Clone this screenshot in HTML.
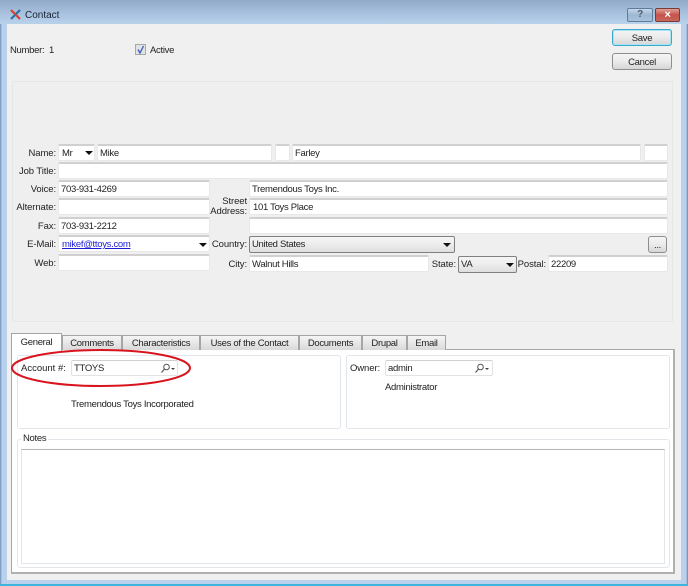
<!DOCTYPE html>
<html><head><meta charset="utf-8"><style>
html,body{margin:0;padding:0;width:688px;height:586px;overflow:hidden;background:#fff}
*{box-sizing:border-box}
#w{position:absolute;left:0;top:0;width:688px;height:586px;overflow:hidden;font:9.5px/14px "Liberation Sans",sans-serif;letter-spacing:-.3px;color:#222;filter:blur(.3px);
background:linear-gradient(90deg,#6d8fb8 0,#b9d1ec 2px,#b9d1ec 686px,#5f86b0 688px)}
#tb{position:absolute;left:0;top:0;width:688px;height:24px;background:linear-gradient(180deg,#90a9c8,#a9c3e0 60%,#b9d2ec)}
#c{position:absolute;left:7px;top:24px;width:674px;height:556px;background:#f0f0f0}
#bot{position:absolute;left:0;top:584px;width:688px;height:2px;background:#3cb4dc}
.a{position:absolute}
.t{position:absolute;white-space:nowrap;line-height:14px}
.r{text-align:right;letter-spacing:-.1px}
.i{position:absolute;background:#fff;border:1px solid #e8e8e8;border-top:2px solid #d0d0d0;border-radius:2px;padding-left:2px;white-space:nowrap;line-height:16px}
.cb{position:absolute;background:linear-gradient(180deg,#f4f4f4,#eeeeee 45%,#dedede);border:1px solid #808080;border-radius:2px;padding-left:2px;line-height:16px;white-space:nowrap}
.ar{position:absolute;width:0;height:0;border-left:4px solid transparent;border-right:4px solid transparent;border-top:4px solid #111}
.b{position:absolute;text-align:center;border:1px solid #8e8e8e;border-radius:3px;background:linear-gradient(180deg,#f4f4f4,#ebebeb 48%,#d6d6d6)}
.tab{position:absolute;top:335px;height:15px;text-align:center;line-height:15px;background:linear-gradient(180deg,#f5f5f5,#d9d9d9);border:1px solid #a5a5a5;border-bottom:none}
.g{position:absolute;background:#fff;border:1px solid #e2e6ea;border-radius:3px}
</style></head><body><div id="w">
<div id="tb"></div>
<div id="c"></div>
<div id="bot"></div>
<svg class="a" style="left:10px;top:9px" width="11" height="11" viewBox="0 0 11 11"><path d="M1 1 L10 10" stroke="#d8402a" stroke-width="2.2"/><path d="M10 1 L6 5" stroke="#2a6fa8" stroke-width="2.2"/><path d="M1 10 L5 6" stroke="#2a6fa8" stroke-width="2.2"/></svg>
<div class="t" style="left:25px;top:9px;font-size:10px;letter-spacing:0;color:#1a2433">Contact</div>
<div class="a" style="left:627px;top:8px;width:26px;height:14px;border:1px solid #5f7c9c;border-radius:2px;background:linear-gradient(180deg,#c5d6e8,#9db7d2 50%,#a9c3dc);text-align:center;font:bold 10px/12px 'Liberation Sans',sans-serif;color:#4c5c6e">?</div>
<div class="a" style="left:655px;top:8px;width:25px;height:14px;border:1px solid #7a3a36;border-radius:2px;background:linear-gradient(180deg,#dda097,#c5524a 50%,#c8675d);text-align:center;font:bold 11px/12px 'Liberation Sans',sans-serif;color:#fff">×</div>

<div class="t" style="left:10px;top:44px">Number:</div>
<div class="t" style="left:49px;top:44px">1</div>
<div class="a" style="left:135px;top:44px;width:11px;height:11px;background:#e3e3e3;border:1px solid #a8a8a8"></div>
<svg class="a" style="left:135px;top:44px" width="11" height="11" viewBox="0 0 11 11"><path d="M3 5.5 L5 9 L8.5 2" fill="none" stroke="#3a5ab8" stroke-width="1.3"/></svg>
<div class="t" style="left:150px;top:44px">Active</div>

<div class="b" style="left:612px;top:29px;width:60px;height:17px;line-height:17px;border-color:#3ca8cc;box-shadow:inset 0 0 0 1px #a8e4f4">Save</div>
<div class="b" style="left:612px;top:53px;width:60px;height:17px;line-height:17px">Cancel</div>

<div class="a" style="left:12px;top:81px;width:661px;height:241px;border:1px solid #e6e8e8;background:#efefef"></div>

<div class="t r" style="left:10px;width:46px;top:147px">Name:</div>
<div class="i" style="left:58px;top:144px;width:37px;height:17px;padding-left:3px">Mr<span class="ar" style="left:26px;top:5px"></span></div>
<div class="i" style="left:97px;top:144px;width:175px;height:17px">Mike</div>
<div class="i" style="left:275px;top:144px;width:15px;height:17px"></div>
<div class="i" style="left:292px;top:144px;width:349px;height:17px">Farley</div>
<div class="i" style="left:644px;top:144px;width:24px;height:17px"></div>

<div class="t r" style="left:10px;width:46px;top:165px">Job Title:</div>
<div class="i" style="left:58px;top:162px;width:610px;height:17px"></div>

<div class="t r" style="left:10px;width:46px;top:183px">Voice:</div>
<div class="i" style="left:58px;top:180px;width:152px;height:17px">703-931-4269</div>
<div class="t r" style="left:10px;width:46px;top:201px">Alternate:</div>
<div class="i" style="left:58px;top:198px;width:152px;height:17px"></div>
<div class="t r" style="left:10px;width:46px;top:220px">Fax:</div>
<div class="i" style="left:58px;top:217px;width:152px;height:17px">703-931-2212</div>
<div class="t r" style="left:10px;width:46px;top:238px">E-Mail:</div>
<div class="i" style="left:58px;top:235px;width:152px;height:17px;padding-left:3px;color:#1c1cd8"><span style="text-decoration:underline">mikef@ttoys.com</span><span class="ar" style="left:140px;top:6px"></span></div>
<div class="t r" style="left:10px;width:46px;top:257px">Web:</div>
<div class="i" style="left:58px;top:254px;width:152px;height:17px"></div>

<div class="i" style="left:249px;top:180px;width:419px;height:17px">Tremendous Toys Inc.</div>
<div class="t r" style="left:200px;width:47px;top:195px">Street</div>
<div class="t r" style="left:200px;width:47px;top:205px">Address:</div>
<div class="i" style="left:249px;top:198px;width:419px;height:17px;padding-left:3px">101 Toys Place</div>
<div class="i" style="left:249px;top:217px;width:419px;height:17px"></div>
<div class="t r" style="left:200px;width:47px;top:238px">Country:</div>
<div class="cb" style="left:249px;top:236px;width:206px;height:17px">United States<span class="ar" style="left:193px;top:6px"></span></div>
<div class="b" style="left:648px;top:236px;width:19px;height:17px;line-height:17px">...</div>
<div class="t r" style="left:200px;width:47px;top:258px">City:</div>
<div class="i" style="left:249px;top:255px;width:180px;height:17px">Walnut Hills</div>
<div class="t r" style="left:420px;width:36px;top:258px">State:</div>
<div class="cb" style="left:458px;top:256px;width:59px;height:17px">VA<span class="ar" style="left:47px;top:6px"></span></div>
<div class="t r" style="left:510px;width:36px;top:258px">Postal:</div>
<div class="i" style="left:548px;top:255px;width:120px;height:17px">22209</div>

<div class="a" style="left:11px;top:349px;width:664px;height:225px;background:#fff;border:1px solid #a8a8a8;border-bottom:2px solid #b0b0b0;border-right:2px solid #b0b0b0"></div>
<div class="tab" style="left:62px;width:60px">Comments</div>
<div class="tab" style="left:122px;width:78px">Characteristics</div>
<div class="tab" style="left:200px;width:99px">Uses of the Contact</div>
<div class="tab" style="left:299px;width:63px">Documents</div>
<div class="tab" style="left:362px;width:45px">Drupal</div>
<div class="tab" style="left:407px;width:39px">Email</div>
<div class="tab" style="left:11px;top:333px;width:51px;height:18px;background:#fff;line-height:18px">General</div>

<div class="g" style="left:17px;top:355px;width:324px;height:74px"></div>
<div class="g" style="left:346px;top:355px;width:324px;height:74px"></div>
<div class="t" style="left:21px;top:362px;letter-spacing:0">Account #:</div>
<div class="i" style="left:71px;top:360px;width:107px;height:16px;border:1px solid #e2e2e2;border-top:1px solid #d0d0d0;padding-left:2px">TTOYS</div>
<svg class="a" style="left:160px;top:363px" width="16" height="11" viewBox="0 0 16 11"><circle cx="6.5" cy="4" r="2.8" fill="none" stroke="#555"/><path d="M4.500 6 L1.500 9.500" stroke="#555" stroke-width="1.200"/><path d="M11 5 h4 l-2 2z" fill="#444"/></svg>
<div class="t" style="left:71px;top:398px">Tremendous Toys Incorporated</div>
<div class="t" style="left:350px;top:362px;letter-spacing:-.1px">Owner:</div>
<div class="i" style="left:385px;top:360px;width:108px;height:16px;border:1px solid #e2e2e2;border-top:1px solid #d0d0d0;padding-left:2px">admin</div>
<svg class="a" style="left:474px;top:363px" width="16" height="11" viewBox="0 0 16 11"><circle cx="6.500" cy="4" r="2.800" fill="none" stroke="#555"/><path d="M4.500 6 L1.500 9.500" stroke="#555" stroke-width="1.200"/><path d="M11 5 h4 l-2 2z" fill="#444"/></svg>
<div class="t" style="left:385px;top:381px">Administrator</div>

<div class="g" style="left:17px;top:439px;width:653px;height:129px"></div>
<div class="t" style="left:21px;top:432px;background:#fff;padding:0 2px">Notes</div>
<div class="a" style="left:21px;top:449px;width:644px;height:115px;background:#fff;border:1px solid #e2e6e8;border-top:1px solid #b4b4b4"></div>

<svg class="a" style="left:10px;top:348px" width="184" height="40" viewBox="0 0 184 40"><ellipse cx="91" cy="20" rx="89" ry="18" fill="none" stroke="#d8141e" stroke-width="2"/></svg>
</div></body></html>
